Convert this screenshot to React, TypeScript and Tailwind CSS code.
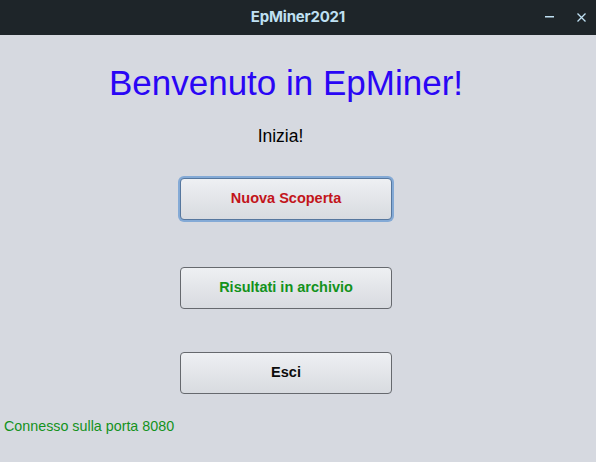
export default function App() {
  const buttons = [
    { label: 'Nuova Scoperta', color: 'text-[#c2141a]', focused: true, mt: 'mt-[31px]' },
    { label: 'Risultati in archivio', color: 'text-[#13921c]', focused: false, mt: 'mt-[43px]' },
    { label: 'Esci', color: 'text-[#0c0c0c]', focused: false, mt: 'mt-[39px]' },
  ];

  return (
    <div className="w-[596px] h-[462px] flex flex-col bg-[#d6d9e0] overflow-hidden font-['Liberation_Sans',Arial,sans-serif]">
      {/* Title bar */}
      <div className="h-[35px] shrink-0 bg-[#1e2529] flex items-center relative">
        <span className="mx-auto text-[15px] font-bold text-[#bfe0f2] font-['Inter',sans-serif] tracking-[-0.2px]">
          EpMiner2021
        </span>
        <svg className="absolute left-[545px] top-[16px]" width="9" height="2" viewBox="0 0 9 2">
          <rect x="0" y="0" width="9" height="1.5" fill="#bfe0f2" />
        </svg>
        <svg className="absolute left-[577px] top-[13px]" width="9" height="9" viewBox="0 0 9 9">
          <path d="M0.5 0.5 L8.5 8.5 M8.5 0.5 L0.5 8.5" stroke="#bfe0f2" strokeWidth="1.3" />
        </svg>
      </div>

      {/* Content */}
      <div className="flex flex-col items-center pr-[24px]">
        <h1 className="mt-[30px] text-[35px] leading-[35px] text-[#2a06f5] whitespace-nowrap">
          Benvenuto in EpMiner!
        </h1>
        <p className="mt-[27px] mr-[11px] text-[17.5px] leading-[18px] text-black">Inizia!</p>

        {buttons.map((b) => (
          <div
            key={b.label}
            className={[
              b.mt,
              'rounded-[6px] p-[2px]',
              b.focused ? 'bg-[#84aad6]' : 'bg-transparent',
            ].join(' ')}
          >
            <button
              className={[
                'w-[212px] h-[42px] rounded-[4px] border bg-gradient-to-b from-[#eef0f3] via-[#e3e5e9] to-[#d8dbe0] flex items-center justify-center text-[14.5px] font-bold',
                b.focused ? 'border-[#56779e]' : 'border-[#66696e]',
                b.color,
              ].join(' ')}
            >
              {b.label}
            </button>
          </div>
        ))}
      </div>

      <p className="mt-[23px] ml-[4px] text-[14.3px] leading-[14px] text-[#13921c]">Connesso sulla porta 8080</p>
    </div>
  );
}
